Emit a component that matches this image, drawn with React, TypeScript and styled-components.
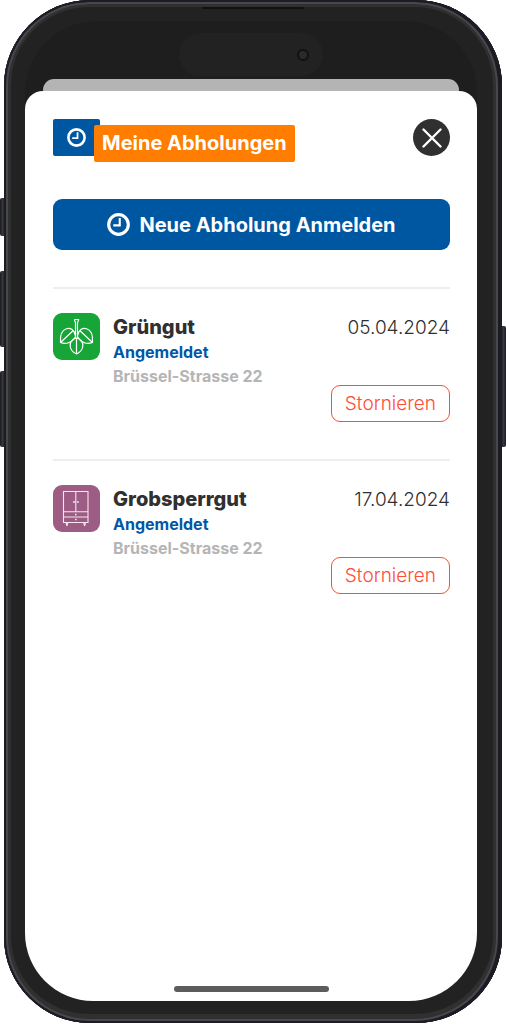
import React from "react";
import styled, { createGlobalStyle } from "styled-components";

const GlobalStyle = createGlobalStyle`
  *, *::before, *::after { box-sizing: border-box; }
  body {
    margin: 0;
    background: #fff;
    color: #303030;
    font-family: Inter, "Liberation Sans", sans-serif;
  }
  h1, h2, p, ul { margin: 0; padding: 0; }
  button { font-family: inherit; cursor: pointer; }
  svg { display: block; flex: none; }
`;

const Page = styled.div`
  position: relative;
  display: flex;
  min-height: 100vh;
  padding: 0 4px 1px;
`;

const Phone = styled.div`
  position: relative;
  flex: 1;
  min-width: 0;
  display: flex;
  padding: 21px 25px 22px 21px;
  border-radius: 86px;
  background: #222;
  box-shadow:
    inset 0 0 0 2px #1b1c24,
    inset -2px 0 0 2px #1b1c24,
    inset 0 0 0 4px #47484b,
    inset -2px 0 0 4px #47484b,
    inset -1px -1px 0 8px #303030;
`;

const Speaker = styled.span`
  position: absolute;
  top: 7px;
  left: 50%;
  width: 102px;
  height: 2px;
  margin-left: -51px;
  border-radius: 1px;
  background: #111;
`;

const SideKey = styled.span<{ $side: "left" | "right"; $top: number; $height: number }>`
  position: absolute;
  ${(p) => p.$side}: 0;
  top: ${(p) => p.$top}px;
  width: 5px;
  height: ${(p) => p.$height}px;
  border-radius: ${(p) => (p.$side === "left" ? "2px 0 0 2px" : "0 2px 2px 0")};
  background: linear-gradient(to right, #1a1a1c, #37383a 50%, #1b1c24);
`;

const Screen = styled.div`
  flex: 1;
  min-width: 0;
  display: flex;
  flex-direction: column;
  border-radius: 72px 72px 68px 68px;
  background: #1e1e1e;
  overflow: hidden;
`;

const StatusArea = styled.div`
  display: flex;
  justify-content: center;
  height: 58px;
  padding-top: 12px;
`;

const Island = styled.div`
  display: flex;
  align-items: center;
  justify-content: flex-end;
  width: 144px;
  height: 43px;
  padding-right: 14px;
  border-radius: 22px;
  background: #222;
`;

const Camera = styled.span`
  width: 12px;
  height: 12px;
  border: 2px solid #111;
  border-radius: 50%;
  background: #2a2a2a;
`;

const BackSheet = styled.div`
  height: 12px;
  margin: 0 18px;
  border-radius: 11px 11px 0 0;
  background: #b4b4b4;
`;

const Sheet = styled.main`
  flex: 1;
  display: flex;
  flex-direction: column;
  padding: 28px 27px 9px 28px;
  border-radius: 18px 18px 0 0;
  background: #fff;
`;

const Header = styled.header`
  display: flex;
  align-items: flex-start;
  justify-content: space-between;
  height: 43px;
`;

const Title = styled.div`
  display: flex;
  align-items: flex-start;
`;

const TitleIcon = styled.span`
  display: flex;
  align-items: center;
  justify-content: center;
  width: 47px;
  height: 37px;
  border-radius: 2px;
  background: #0057a1;
  color: #fff;
`;

const TitleText = styled.h1`
  margin: 6px 0 0 -6px;
  padding: 0 8px;
  border-radius: 2px;
  background: #ff7d00;
  color: #fff;
  font-size: 20px;
  font-weight: 700;
  line-height: 37px;
  white-space: nowrap;
`;

const CloseButton = styled.button`
  display: flex;
  align-items: center;
  justify-content: center;
  width: 37px;
  height: 37px;
  padding: 0;
  border: 0;
  border-radius: 50%;
  background: #303030;
  color: #fff;
`;

const PrimaryButton = styled.button`
  display: flex;
  align-items: center;
  justify-content: center;
  gap: 9px;
  height: 51px;
  margin: 37px 0;
  padding: 0;
  border: 0;
  border-radius: 9px;
  background: #0057a1;
  color: #fff;
  font-size: 20px;
  font-weight: 700;
  white-space: nowrap;
`;

const PickupList = styled.ul`
  list-style: none;
`;

const Pickup = styled.li`
  display: flex;
  gap: 13px;
  padding: 24px 0 37px;
  border-top: 2px solid #eee;
`;

const Tile = styled.span<{ $color: string }>`
  width: 47px;
  height: 47px;
  border-radius: 9px;
  background: ${(p) => p.$color};
`;

const Details = styled.div`
  flex: 1;
  min-width: 0;
  padding-top: 1px;
`;

const Kind = styled.h2`
  font-size: 20px;
  font-weight: 800;
  line-height: 26px;
`;

const Line = styled.p<{ $color: string }>`
  color: ${(p) => p.$color};
  font-size: 16px;
  font-weight: 700;
  line-height: 24px;
  white-space: nowrap;
`;

const Side = styled.div`
  display: flex;
  flex-direction: column;
  align-items: flex-end;
  gap: 45px;
  padding-top: 1px;
`;

const PickupDate = styled.time`
  font-size: 19px;
  font-weight: 300;
  line-height: 28px;
  height: 26px;
`;

const CancelButton = styled.button`
  height: 37px;
  padding: 0 13px;
  border: 1px solid #ff4d36;
  border-radius: 9px;
  background: #fff;
  color: #ff4d36;
  font-size: 19px;
  font-weight: 300;
`;

const HomeIndicator = styled.div`
  align-self: center;
  width: 155px;
  height: 6px;
  margin-top: auto;
  border-radius: 3px;
  background: #5c5c5c;
`;

const ClockIcon = ({ size }: { size: number }) => (
  <svg width={size} height={size} viewBox="0 0 22 22" fill="none" stroke="currentColor" aria-hidden="true">
    <circle cx="11" cy="11" r="9.4" strokeWidth="3" />
    <path d="M12.2 4.8V11.8H6" strokeWidth="2" />
  </svg>
);

const CrossIcon = () => (
  <svg width="20" height="20" viewBox="0 0 20 20" stroke="currentColor" strokeWidth="2.4" strokeLinecap="round" aria-hidden="true">
    <path d="M1.500 1.500 18.500 18.500M18.500 1.500 1.500 18.500" />
  </svg>
);

const LeafIcon = () => (
  <svg width="47" height="47" viewBox="0 0 47 47" fill="none" stroke="#fff" strokeWidth="1.2" strokeLinejoin="round" aria-hidden="true">
    <path d="M21.300 6.500h4.400l-1.200 3.200V25M21.300 6.500l1.200 3.200V25" />
    <path d="M22.300 22.500C21.500 17 17.500 14.500 13.500 15.700 8.500 17.200 7 23 7.500 29.500 13 31.500 19 30 22.300 24M7.500 29.500 20 17.800" />
    <path d="M24.700 22.500C25.500 17 29.500 14.500 33.500 15.700 38.500 17.200 40 23 39.500 29.500 34 31.500 28 30 24.700 24M39.500 29.500 27 17.800" />
    <path d="M23.500 25C18.500 26 16.500 30 17.300 34 18 37.500 20.500 39.500 23.500 41 26.500 39.500 29 37.500 29.700 34 30.500 30 28.500 26 23.500 25ZM23.500 25V41" />
  </svg>
);

const CabinetIcon = () => (
  <svg width="47" height="47" viewBox="0 0 47 47" fill="none" stroke="#f7e6f0" strokeWidth="1.1" aria-hidden="true">
    <path d="M10.500 6.500H35V37.500H10.500ZM22.800 6.500V26.700M10.500 26.700H35M10.500 32H35" />
    <path d="M20 17h2M23.800 17h2M22 29.500h1.600M22 34.500h1.600" strokeWidth="1.400" />
    <path d="M13 37.500 14 41M14.800 37.500 14 41M32.500 37.500 31.500 41M30.700 37.500 31.500 41" />
  </svg>
);

const pickups = [
  { kind: "Grüngut", date: "05.04.2024", iso: "2024-04-05", color: "#18a538", icon: <LeafIcon /> },
  { kind: "Grobsperrgut", date: "17.04.2024", iso: "2024-04-17", color: "#9c5c83", icon: <CabinetIcon /> },
];

export default function App() {
  return (
    <>
      <GlobalStyle />
      <Page>
        <SideKey $side="left" $top={198} $height={38} />
        <SideKey $side="left" $top={271} $height={76} />
        <SideKey $side="left" $top={371} $height={76} />
        <SideKey $side="right" $top={326} $height={121} />
        <Phone>
          <Speaker />
          <Screen>
            <StatusArea>
              <Island>
                <Camera />
              </Island>
            </StatusArea>
            <BackSheet />
            <Sheet>
              <Header>
                <Title>
                  <TitleIcon>
                    <ClockIcon size={19} />
                  </TitleIcon>
                  <TitleText>Meine Abholungen</TitleText>
                </Title>
                <CloseButton aria-label="Schliessen">
                  <CrossIcon />
                </CloseButton>
              </Header>
              <PrimaryButton>
                <ClockIcon size={23} />
                Neue Abholung Anmelden
              </PrimaryButton>
              <PickupList>
                {pickups.map((p) => (
                  <Pickup key={p.kind}>
                    <Tile $color={p.color}>{p.icon}</Tile>
                    <Details>
                      <Kind>{p.kind}</Kind>
                      <Line $color="#0057a8">Angemeldet</Line>
                      <Line $color="#b5b5b5">Brüssel-Strasse 22</Line>
                    </Details>
                    <Side>
                      <PickupDate dateTime={p.iso}>{p.date}</PickupDate>
                      <CancelButton>Stornieren</CancelButton>
                    </Side>
                  </Pickup>
                ))}
              </PickupList>
              <HomeIndicator />
            </Sheet>
          </Screen>
        </Phone>
      </Page>
    </>
  );
}
